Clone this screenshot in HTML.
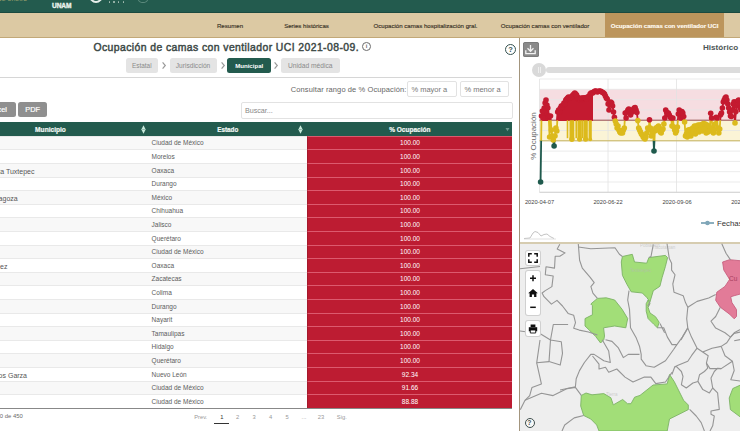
<!DOCTYPE html>
<html><head><meta charset="utf-8">
<style>
*{margin:0;padding:0;box-sizing:border-box}
html,body{width:740px;height:431px;overflow:hidden;background:#fff;font-family:"Liberation Sans",sans-serif;color:#555}
.abs{position:absolute}
.t{position:absolute;white-space:nowrap;line-height:1}
</style></head><body>

<div class="abs" style="left:0;top:0;width:740px;height:13px;background:#235b4e;border-bottom:1px solid #1b4a3f"></div>
<div class="t" style="left:-2px;top:-3px;font-size:5px;color:#8f9a6a;letter-spacing:0.5px;font-weight:bold">DE SALUD</div>
<div class="t" style="left:52px;top:2.6px;font-size:6.6px;font-weight:bold;color:#e9f2ec;-webkit-text-stroke:0.35px #e9f2ec;letter-spacing:-0.1px">UNAM</div>
<div class="t" style="left:54px;top:-2.6px;font-size:3.6px;color:#a9c2b8">Instituto de</div>
<div class="abs" style="left:89px;top:-12px;width:14px;height:15px;border-radius:50%;border:2.5px solid #e8f0ec"></div>
<div class="abs" style="left:108.5px;top:1px;width:1.5px;height:1.5px;background:#a8c0b6;border-radius:50%"></div>
<div class="abs" style="left:113px;top:1px;width:1.5px;height:1.5px;background:#a8c0b6;border-radius:50%"></div>
<div class="abs" style="left:117.5px;top:1px;width:1.5px;height:1.5px;background:#a8c0b6;border-radius:50%"></div>
<div class="abs" style="left:122.5px;top:1px;width:1.5px;height:1.5px;background:#a8c0b6;border-radius:50%"></div>
<div class="abs" style="left:138px;top:-4px;width:10px;height:7px;border-radius:50%;border:1px solid #6f9a8c;opacity:.8"></div>
<div class="abs" style="left:0;top:13px;width:740px;height:25px;background:#dcc9a3;border-bottom:1px solid #c2a878"></div>
<div class="t" style="left:130px;width:200px;text-align:center;top:23px;font-size:6.1px;color:#3a3327;-webkit-text-stroke:0.15px #3a3327">Resumen</div>
<div class="t" style="left:206.5px;width:200px;text-align:center;top:23px;font-size:6.1px;color:#3a3327;-webkit-text-stroke:0.15px #3a3327">Series históricas</div>
<div class="t" style="left:325.5px;width:200px;text-align:center;top:23px;font-size:6.1px;color:#3a3327;-webkit-text-stroke:0.15px #3a3327">Ocupación camas hospitalización gral.</div>
<div class="t" style="left:445px;width:200px;text-align:center;top:23px;font-size:6.1px;color:#3a3327;-webkit-text-stroke:0.15px #3a3327">Ocupación camas con ventilador</div>
<div class="abs" style="left:605px;top:13px;width:119px;height:24px;background:#bc955c"></div>
<div class="t" style="left:564.5px;width:200px;text-align:center;top:23px;font-size:6.1px;font-weight:bold;color:#fffaf0;-webkit-text-stroke:0.15px #fffaf0">Ocupación camas con ventilador UCI</div>
<div class="abs" style="left:518.7px;top:38px;width:1.3px;height:393px;background:#a3957d"></div>
<div class="t" style="left:93.5px;top:42.6px;font-size:10.4px;letter-spacing:0.42px;color:#3c4946;-webkit-text-stroke:0.45px #3c4946">Ocupación de camas con ventilador UCI 2021-08-09.</div>
<div class="abs" style="left:362.2px;top:42.2px;width:8.8px;height:8.8px;border-radius:50%;border:1.2px solid #6a6a6a"></div>
<div class="t" style="left:365.8px;top:43.8px;font-size:5.5px;font-weight:bold;color:#666">i</div>
<div class="abs" style="left:505.2px;top:43.5px;width:11px;height:11px;border-radius:50%;border:1.5px solid #34514f"></div>
<div class="t" style="left:508.3px;top:45.6px;font-size:7.5px;font-weight:bold;color:#34514f">?</div>
<div class="abs" style="left:125.6px;top:57.6px;width:32.400000000000006px;height:15.4px;background:#e4e4e4;border-radius:2.5px"></div>
<div class="t" style="left:125.6px;width:32.400000000000006px;text-align:center;top:63px;font-size:6.4px;font-weight:normal;color:#8a8a8a">Estatal</div>
<div class="abs" style="left:169.5px;top:57.6px;width:47.099999999999994px;height:15.4px;background:#e4e4e4;border-radius:2.5px"></div>
<div class="t" style="left:169.5px;width:47.099999999999994px;text-align:center;top:63px;font-size:6.6px;font-weight:normal;color:#8a8a8a">Jurisdicción</div>
<div class="abs" style="left:227.4px;top:57.6px;width:43.599999999999994px;height:15.4px;background:#235b4e;border-radius:2.5px"></div>
<div class="t" style="left:227.4px;width:43.599999999999994px;text-align:center;top:63px;font-size:6.1px;font-weight:bold;color:#fff">Municipal</div>
<div class="abs" style="left:281px;top:57.6px;width:58.5px;height:15.4px;background:#e4e4e4;border-radius:2.5px"></div>
<div class="t" style="left:281px;width:58.5px;text-align:center;top:63px;font-size:6.7px;font-weight:normal;color:#8a8a8a">Unidad médica</div>
<svg class="abs" style="left:160.9px;top:61px" width="6" height="9" viewBox="0 0 6 9"><path d="M1.6 1.3 L4.3 4.5 L1.6 7.7" stroke="#9a9a9a" stroke-width="1.2" fill="none"/></svg>
<svg class="abs" style="left:219.6px;top:61px" width="6" height="9" viewBox="0 0 6 9"><path d="M1.6 1.3 L4.3 4.5 L1.6 7.7" stroke="#9a9a9a" stroke-width="1.2" fill="none"/></svg>
<svg class="abs" style="left:272.9px;top:61px" width="6" height="9" viewBox="0 0 6 9"><path d="M1.6 1.3 L4.3 4.5 L1.6 7.7" stroke="#9a9a9a" stroke-width="1.2" fill="none"/></svg>
<div class="abs" style="left:0;top:76.5px;width:512px;height:1px;background:#d6d6d6"></div>
<div class="t" style="left:290.8px;top:86.2px;font-size:7.5px;letter-spacing:0.1px;color:#666">Consultar rango de % Ocupación:</div>
<div class="abs" style="left:407.4px;top:80.7px;width:49.200000000000045px;height:16.6px;border:1px solid #e2e2e2;border-radius:2px;background:#fff"></div>
<div class="t" style="left:411.4px;top:86px;font-size:7.5px;color:#777">% mayor a</div>
<div class="abs" style="left:460.4px;top:80.7px;width:48.60000000000002px;height:16.6px;border:1px solid #e2e2e2;border-radius:2px;background:#fff"></div>
<div class="t" style="left:464.4px;top:86px;font-size:7.5px;color:#777">% menor a</div>
<div class="abs" style="left:241px;top:101.5px;width:271.5px;height:17.4px;border:1px solid #e2e2e2;border-radius:2px;background:#fff"></div>
<div class="t" style="left:244.9px;top:106.8px;font-size:7.2px;color:#888">Buscar...</div>
<div class="abs" style="left:-10px;top:101.9px;width:25.6px;height:15.4px;background:#8f8f8f;border-radius:2.5px"></div>
<div class="t" style="left:-2.5px;top:106.2px;font-size:7.3px;color:#fff;-webkit-text-stroke:0.2px #fff">cel</div>
<div class="abs" style="left:18.3px;top:101.9px;width:28.7px;height:15.4px;background:#8f8f8f;border-radius:2.5px"></div>
<div class="t" style="left:18.3px;width:28.7px;text-align:center;top:106.2px;font-size:7.3px;color:#fff;-webkit-text-stroke:0.2px #fff">PDF</div>
<div class="abs" style="left:0;top:121.8px;width:512.4px;height:14px;background:#235b4e"></div>
<div class="t" style="left:0;width:101px;text-align:center;top:127.2px;font-size:6.6px;font-weight:bold;color:#f2f8f5;-webkit-text-stroke:0.2px #f2f8f5">Municipio</div>
<div class="t" style="left:177.8px;width:100px;text-align:center;top:127.2px;font-size:6.3px;font-weight:bold;color:#f2f8f5;-webkit-text-stroke:0.2px #f2f8f5">Estado</div>
<div class="t" style="left:359.8px;width:100px;text-align:center;top:127.2px;font-size:6.5px;font-weight:bold;color:#f2f8f5;-webkit-text-stroke:0.2px #f2f8f5">% Ocupación</div>
<svg class="abs" style="left:140.5px;top:124.5px" width="5" height="9" viewBox="0 0 5 9"><path d="M2.5 0.2 L4.6 4.5 L2.5 8.8 L0.4 4.5Z" fill="#c9eadc"/><path d="M1.2 4.5 H3.8" stroke="#5d8a7c" stroke-width="0.5"/></svg>
<svg class="abs" style="left:298.3px;top:124.5px" width="5" height="9" viewBox="0 0 5 9"><path d="M2.5 0.2 L4.6 4.5 L2.5 8.8 L0.4 4.5Z" fill="#c9eadc"/><path d="M1.2 4.5 H3.8" stroke="#5d8a7c" stroke-width="0.5"/></svg>
<svg class="abs" style="left:504.5px;top:127px" width="5" height="5" viewBox="0 0 5 5"><path d="M0.5 1 H4.5 L2.5 4.2Z" fill="#6f9a8f"/></svg>
<div class="abs" style="left:0;top:135.80px;width:307px;height:13.6px;background:#f8f8f8;border-top:1px solid #e9e9e9"></div>
<div class="abs" style="left:307px;top:135.80px;width:205.4px;height:13.6px;background:#bd1c32;border-top:1px solid #dc5a6e;border-left:1px solid #a5192b"></div>
<div class="t" style="left:151.6px;top:140.40px;font-size:6.5px;color:#5c5c5c">Ciudad de México</div>
<div class="t" style="left:360px;width:100px;text-align:center;top:140.40px;font-size:6.5px;color:#fff">100.00</div>
<div class="abs" style="left:0;top:149.40px;width:307px;height:13.6px;background:#ffffff;border-top:1px solid #e9e9e9"></div>
<div class="abs" style="left:307px;top:149.40px;width:205.4px;height:13.6px;background:#bd1c32;border-top:1px solid #dc5a6e;border-left:1px solid #a5192b"></div>
<div class="t" style="left:151.6px;top:154.00px;font-size:6.5px;color:#5c5c5c">Morelos</div>
<div class="t" style="left:360px;width:100px;text-align:center;top:154.00px;font-size:6.5px;color:#fff">100.00</div>
<div class="abs" style="left:0;top:163.00px;width:307px;height:13.6px;background:#f8f8f8;border-top:1px solid #e9e9e9"></div>
<div class="abs" style="left:307px;top:163.00px;width:205.4px;height:13.6px;background:#bd1c32;border-top:1px solid #dc5a6e;border-left:1px solid #a5192b"></div>
<div class="t" style="left:151.6px;top:167.60px;font-size:6.5px;color:#5c5c5c">Oaxaca</div>
<div class="t" style="left:360px;width:100px;text-align:center;top:167.60px;font-size:6.5px;color:#fff">100.00</div>
<div class="t" style="left:-100px;width:134.5px;text-align:right;top:167.60px;font-size:7px;color:#555">ta Tuxtepec</div>
<div class="abs" style="left:0;top:176.60px;width:307px;height:13.6px;background:#ffffff;border-top:1px solid #e9e9e9"></div>
<div class="abs" style="left:307px;top:176.60px;width:205.4px;height:13.6px;background:#bd1c32;border-top:1px solid #dc5a6e;border-left:1px solid #a5192b"></div>
<div class="t" style="left:151.6px;top:181.20px;font-size:6.5px;color:#5c5c5c">Durango</div>
<div class="t" style="left:360px;width:100px;text-align:center;top:181.20px;font-size:6.5px;color:#fff">100.00</div>
<div class="abs" style="left:0;top:190.20px;width:307px;height:13.6px;background:#f8f8f8;border-top:1px solid #e9e9e9"></div>
<div class="abs" style="left:307px;top:190.20px;width:205.4px;height:13.6px;background:#bd1c32;border-top:1px solid #dc5a6e;border-left:1px solid #a5192b"></div>
<div class="t" style="left:151.6px;top:194.80px;font-size:6.5px;color:#5c5c5c">México</div>
<div class="t" style="left:360px;width:100px;text-align:center;top:194.80px;font-size:6.5px;color:#fff">100.00</div>
<div class="t" style="left:-100px;width:117.7px;text-align:right;top:194.80px;font-size:7px;color:#555">agoza</div>
<div class="abs" style="left:0;top:203.80px;width:307px;height:13.6px;background:#ffffff;border-top:1px solid #e9e9e9"></div>
<div class="abs" style="left:307px;top:203.80px;width:205.4px;height:13.6px;background:#bd1c32;border-top:1px solid #dc5a6e;border-left:1px solid #a5192b"></div>
<div class="t" style="left:151.6px;top:208.40px;font-size:6.5px;color:#5c5c5c">Chihuahua</div>
<div class="t" style="left:360px;width:100px;text-align:center;top:208.40px;font-size:6.5px;color:#fff">100.00</div>
<div class="abs" style="left:0;top:217.40px;width:307px;height:13.6px;background:#f8f8f8;border-top:1px solid #e9e9e9"></div>
<div class="abs" style="left:307px;top:217.40px;width:205.4px;height:13.6px;background:#bd1c32;border-top:1px solid #dc5a6e;border-left:1px solid #a5192b"></div>
<div class="t" style="left:151.6px;top:222.00px;font-size:6.5px;color:#5c5c5c">Jalisco</div>
<div class="t" style="left:360px;width:100px;text-align:center;top:222.00px;font-size:6.5px;color:#fff">100.00</div>
<div class="abs" style="left:0;top:231.00px;width:307px;height:13.6px;background:#ffffff;border-top:1px solid #e9e9e9"></div>
<div class="abs" style="left:307px;top:231.00px;width:205.4px;height:13.6px;background:#bd1c32;border-top:1px solid #dc5a6e;border-left:1px solid #a5192b"></div>
<div class="t" style="left:151.6px;top:235.60px;font-size:6.5px;color:#5c5c5c">Querétaro</div>
<div class="t" style="left:360px;width:100px;text-align:center;top:235.60px;font-size:6.5px;color:#fff">100.00</div>
<div class="abs" style="left:0;top:244.60px;width:307px;height:13.6px;background:#f8f8f8;border-top:1px solid #e9e9e9"></div>
<div class="abs" style="left:307px;top:244.60px;width:205.4px;height:13.6px;background:#bd1c32;border-top:1px solid #dc5a6e;border-left:1px solid #a5192b"></div>
<div class="t" style="left:151.6px;top:249.20px;font-size:6.5px;color:#5c5c5c">Ciudad de México</div>
<div class="t" style="left:360px;width:100px;text-align:center;top:249.20px;font-size:6.5px;color:#fff">100.00</div>
<div class="abs" style="left:0;top:258.20px;width:307px;height:13.6px;background:#ffffff;border-top:1px solid #e9e9e9"></div>
<div class="abs" style="left:307px;top:258.20px;width:205.4px;height:13.6px;background:#bd1c32;border-top:1px solid #dc5a6e;border-left:1px solid #a5192b"></div>
<div class="t" style="left:151.6px;top:262.80px;font-size:6.5px;color:#5c5c5c">Oaxaca</div>
<div class="t" style="left:360px;width:100px;text-align:center;top:262.80px;font-size:6.5px;color:#fff">100.00</div>
<div class="t" style="left:-100px;width:107.5px;text-align:right;top:262.80px;font-size:7px;color:#555">ez</div>
<div class="abs" style="left:0;top:271.80px;width:307px;height:13.6px;background:#f8f8f8;border-top:1px solid #e9e9e9"></div>
<div class="abs" style="left:307px;top:271.80px;width:205.4px;height:13.6px;background:#bd1c32;border-top:1px solid #dc5a6e;border-left:1px solid #a5192b"></div>
<div class="t" style="left:151.6px;top:276.40px;font-size:6.5px;color:#5c5c5c">Zacatecas</div>
<div class="t" style="left:360px;width:100px;text-align:center;top:276.40px;font-size:6.5px;color:#fff">100.00</div>
<div class="abs" style="left:0;top:285.40px;width:307px;height:13.6px;background:#ffffff;border-top:1px solid #e9e9e9"></div>
<div class="abs" style="left:307px;top:285.40px;width:205.4px;height:13.6px;background:#bd1c32;border-top:1px solid #dc5a6e;border-left:1px solid #a5192b"></div>
<div class="t" style="left:151.6px;top:290.00px;font-size:6.5px;color:#5c5c5c">Colima</div>
<div class="t" style="left:360px;width:100px;text-align:center;top:290.00px;font-size:6.5px;color:#fff">100.00</div>
<div class="abs" style="left:0;top:299.00px;width:307px;height:13.6px;background:#f8f8f8;border-top:1px solid #e9e9e9"></div>
<div class="abs" style="left:307px;top:299.00px;width:205.4px;height:13.6px;background:#bd1c32;border-top:1px solid #dc5a6e;border-left:1px solid #a5192b"></div>
<div class="t" style="left:151.6px;top:303.60px;font-size:6.5px;color:#5c5c5c">Durango</div>
<div class="t" style="left:360px;width:100px;text-align:center;top:303.60px;font-size:6.5px;color:#fff">100.00</div>
<div class="abs" style="left:0;top:312.60px;width:307px;height:13.6px;background:#ffffff;border-top:1px solid #e9e9e9"></div>
<div class="abs" style="left:307px;top:312.60px;width:205.4px;height:13.6px;background:#bd1c32;border-top:1px solid #dc5a6e;border-left:1px solid #a5192b"></div>
<div class="t" style="left:151.6px;top:317.20px;font-size:6.5px;color:#5c5c5c">Nayarit</div>
<div class="t" style="left:360px;width:100px;text-align:center;top:317.20px;font-size:6.5px;color:#fff">100.00</div>
<div class="abs" style="left:0;top:326.20px;width:307px;height:13.6px;background:#f8f8f8;border-top:1px solid #e9e9e9"></div>
<div class="abs" style="left:307px;top:326.20px;width:205.4px;height:13.6px;background:#bd1c32;border-top:1px solid #dc5a6e;border-left:1px solid #a5192b"></div>
<div class="t" style="left:151.6px;top:330.80px;font-size:6.5px;color:#5c5c5c">Tamaulipas</div>
<div class="t" style="left:360px;width:100px;text-align:center;top:330.80px;font-size:6.5px;color:#fff">100.00</div>
<div class="abs" style="left:0;top:339.80px;width:307px;height:13.6px;background:#ffffff;border-top:1px solid #e9e9e9"></div>
<div class="abs" style="left:307px;top:339.80px;width:205.4px;height:13.6px;background:#bd1c32;border-top:1px solid #dc5a6e;border-left:1px solid #a5192b"></div>
<div class="t" style="left:151.6px;top:344.40px;font-size:6.5px;color:#5c5c5c">Hidalgo</div>
<div class="t" style="left:360px;width:100px;text-align:center;top:344.40px;font-size:6.5px;color:#fff">100.00</div>
<div class="abs" style="left:0;top:353.40px;width:307px;height:13.6px;background:#f8f8f8;border-top:1px solid #e9e9e9"></div>
<div class="abs" style="left:307px;top:353.40px;width:205.4px;height:13.6px;background:#bd1c32;border-top:1px solid #dc5a6e;border-left:1px solid #a5192b"></div>
<div class="t" style="left:151.6px;top:358.00px;font-size:6.5px;color:#5c5c5c">Querétaro</div>
<div class="t" style="left:360px;width:100px;text-align:center;top:358.00px;font-size:6.5px;color:#fff">100.00</div>
<div class="abs" style="left:0;top:367.00px;width:307px;height:13.6px;background:#ffffff;border-top:1px solid #e9e9e9"></div>
<div class="abs" style="left:307px;top:367.00px;width:205.4px;height:13.6px;background:#bd1c32;border-top:1px solid #dc5a6e;border-left:1px solid #a5192b"></div>
<div class="t" style="left:151.6px;top:371.60px;font-size:6.5px;color:#5c5c5c">Nuevo León</div>
<div class="t" style="left:360px;width:100px;text-align:center;top:371.60px;font-size:6.5px;color:#fff">92.34</div>
<div class="t" style="left:-100px;width:127px;text-align:right;top:371.60px;font-size:7px;color:#555">os Garza</div>
<div class="abs" style="left:0;top:380.60px;width:307px;height:13.6px;background:#f8f8f8;border-top:1px solid #e9e9e9"></div>
<div class="abs" style="left:307px;top:380.60px;width:205.4px;height:13.6px;background:#bd1c32;border-top:1px solid #dc5a6e;border-left:1px solid #a5192b"></div>
<div class="t" style="left:151.6px;top:385.20px;font-size:6.5px;color:#5c5c5c">Ciudad de México</div>
<div class="t" style="left:360px;width:100px;text-align:center;top:385.20px;font-size:6.5px;color:#fff">91.66</div>
<div class="abs" style="left:0;top:394.20px;width:307px;height:13.6px;background:#ffffff;border-top:1px solid #e9e9e9"></div>
<div class="abs" style="left:307px;top:394.20px;width:205.4px;height:13.6px;background:#bd1c32;border-top:1px solid #dc5a6e;border-left:1px solid #a5192b"></div>
<div class="t" style="left:151.6px;top:398.80px;font-size:6.5px;color:#5c5c5c">Ciudad de México</div>
<div class="t" style="left:360px;width:100px;text-align:center;top:398.80px;font-size:6.5px;color:#fff">88.88</div>
<div class="abs" style="left:0;top:407.5px;width:512.4px;height:1px;background:#888"></div>
<div class="t" style="left:-13.3px;top:414.3px;font-size:5.9px;color:#6a6a6a">1 a 20 de 450</div>
<div class="t" style="left:180.7px;width:40px;text-align:center;top:414.7px;font-size:5.8px;color:#999">Prev.</div>
<div class="t" style="left:201.8px;width:40px;text-align:center;top:414.7px;font-size:5.8px;color:#333">1</div>
<div class="t" style="left:217.7px;width:40px;text-align:center;top:414.7px;font-size:5.8px;color:#999">2</div>
<div class="t" style="left:234.2px;width:40px;text-align:center;top:414.7px;font-size:5.8px;color:#999">3</div>
<div class="t" style="left:250.5px;width:40px;text-align:center;top:414.7px;font-size:5.8px;color:#999">4</div>
<div class="t" style="left:267px;width:40px;text-align:center;top:414.7px;font-size:5.8px;color:#999">5</div>
<div class="t" style="left:284px;width:40px;text-align:center;top:414.7px;font-size:5.8px;color:#999">...</div>
<div class="t" style="left:301px;width:40px;text-align:center;top:414.7px;font-size:5.8px;color:#999">23</div>
<div class="t" style="left:321.8px;width:40px;text-align:center;top:414.7px;font-size:5.8px;color:#999">Sig.</div>
<div class="abs" style="left:214px;top:423px;width:14.7px;height:1px;background:#333"></div>
<div class="abs" style="left:522.5px;top:41.6px;width:16.7px;height:15.3px;background:#8a8a8a;border-radius:2.5px;box-shadow:inset 0 0 0 0.7px #777"></div>
<svg class="abs" style="left:522.3px;top:41.6px" width="17" height="15" viewBox="0 0 17 15"><path d="M8.5 3 V9.3 M5.5 6.3 L8.5 9.3 L11.5 6.3" stroke="#f2f2f2" stroke-width="1.3" fill="none"/><path d="M3.8 8.3 V11.7 H13.2 V8.3" stroke="#f2f2f2" stroke-width="1.3" fill="none"/></svg>
<div class="t" style="left:703px;top:44.2px;font-size:8.1px;font-weight:bold;color:#4d5555">Histórico</div>
<div class="abs" style="left:546px;top:67.2px;width:200px;height:6px;background:#dcdcdc;border-radius:3px"></div>
<div class="abs" style="left:532px;top:63.3px;width:14px;height:14px;background:#d9d9d9;border-radius:50%"></div>
<div class="abs" style="left:538.3px;top:67px;width:0.6px;height:6px;background:#eee"></div>
<div class="abs" style="left:539.8px;top:67px;width:0.6px;height:6px;background:#eee"></div>
<svg class="abs" style="left:0;top:0" width="740" height="431" viewBox="0 0 740 431">
<rect x="539.5" y="89.3" width="201" height="30.900000000000006" fill="#f6dde1"/>
<rect x="539.5" y="120.2" width="201" height="20.60000000000001" fill="#fbf4d6"/>
<line x1="539.5" x2="740" y1="192.3" y2="192.3" stroke="#e6e6e6" stroke-width="0.8"/>
<line x1="539.5" x2="740" y1="182.0" y2="182.0" stroke="#e6e6e6" stroke-width="0.8"/>
<line x1="539.5" x2="740" y1="171.7" y2="171.7" stroke="#e6e6e6" stroke-width="0.8"/>
<line x1="539.5" x2="740" y1="161.4" y2="161.4" stroke="#e6e6e6" stroke-width="0.8"/>
<line x1="539.5" x2="740" y1="151.1" y2="151.1" stroke="#e6e6e6" stroke-width="0.8"/>
<line x1="539.5" x2="740" y1="140.8" y2="140.8" stroke="#e6e6e6" stroke-width="0.8"/>
<line x1="539.5" x2="740" y1="130.5" y2="130.5" stroke="#e6e6e6" stroke-width="0.8"/>
<line x1="539.5" x2="740" y1="120.2" y2="120.2" stroke="#e6e6e6" stroke-width="0.8"/>
<line x1="539.5" x2="740" y1="109.9" y2="109.9" stroke="#e6e6e6" stroke-width="0.8"/>
<line x1="539.5" x2="740" y1="99.6" y2="99.6" stroke="#e6e6e6" stroke-width="0.8"/>
<line x1="539.5" x2="740" y1="89.3" y2="89.3" stroke="#e6e6e6" stroke-width="0.8"/>
<line x1="539.5" x2="740" y1="79.0" y2="79.0" stroke="#e6e6e6" stroke-width="0.8"/>
<line x1="539.5" x2="539.5" y1="79.0" y2="192.3" stroke="#e2e2e2" stroke-width="0.8"/>
<line x1="608" x2="608" y1="79.0" y2="192.3" stroke="#e2e2e2" stroke-width="0.8"/>
<line x1="676.5" x2="676.5" y1="79.0" y2="192.3" stroke="#e2e2e2" stroke-width="0.8"/>
<line x1="539.5" x2="740" y1="120.2" y2="120.2" stroke="#9b4a4a" stroke-width="1"/>
<line x1="539.5" x2="740" y1="140.8" y2="140.8" stroke="#c9b45a" stroke-width="1"/>
<line x1="539.5" x2="740" y1="192.3" y2="192.3" stroke="#ccc" stroke-width="0.8"/>
<defs><clipPath id="cr"><rect x="530" y="0" width="220" height="120.2"/></clipPath><clipPath id="cy"><rect x="530" y="120.2" width="220" height="20.6"/></clipPath><clipPath id="cg"><rect x="530" y="140.8" width="220" height="60"/></clipPath><clipPath id="plot"><rect x="535" y="75" width="205" height="120"/></clipPath></defs>
<g clip-path="url(#plot)">
<path d="M556 121 L557 112 L560 108 L565 101 L569 97 L575 93 L580 99 L586 98 L592 93 L593 93 L593 121 Z" fill="#c41a30"/>
<path d="M541 121 L542 111 L546 100 L549 108 L550 121 Z" fill="#c41a30"/>
<rect x="569.5" y="120.2" width="4.8" height="19.3" fill="#dcba1c"/>
<circle cx="571.9" cy="139.3" r="2.7" fill="#dcba1c"/>
<rect x="577.4" y="120.2" width="4.4" height="19.3" fill="#dcba1c"/>
<circle cx="579.6" cy="139.3" r="2.5" fill="#dcba1c"/>
<rect x="583.4" y="120.2" width="4.4" height="19.3" fill="#dcba1c"/>
<circle cx="585.6" cy="139.3" r="2.5" fill="#dcba1c"/>
<rect x="588.6" y="120.2" width="3.2" height="19.3" fill="#dcba1c"/>
<circle cx="590.2" cy="139.3" r="1.9" fill="#dcba1c"/>
<rect x="566.7" y="120.2" width="1.6" height="18" fill="#dcba1c"/>
<rect x="575.4000000000001" y="120.2" width="1.6" height="18" fill="#dcba1c"/>
<rect x="581.7" y="120.2" width="1.6" height="18" fill="#dcba1c"/>
<path d="M540.6 182.0 L541.5 116.0 L542.4 111.0 L543.3 118.0 L544.2 108.0 L545.1 103.0 L546.0 100.0 L546.9 105.0 L547.8 108.0 L548.7 116.0 L549.6 137.0 L550.5 116.0 L551.4 130.0 L552.3 136.0 L553.2 140.0 L554.1 146.0 L555.0 136.0 L555.9 128.0 L556.8 131.0 L557.7 112.0 L558.6 110.0 L559.5 112.0 L560.4 108.0 L561.3 106.0 L562.2 107.0 L563.1 105.0 L564.0 103.0 L564.9 104.0 L565.8 100.0 L566.7 99.0 L567.6 98.0 L568.5 97.0 L569.4 98.0 L570.3 98.0 L571.2 97.0 L572.1 96.0 L573.0 95.0 L573.9 94.0 L574.8 93.0 L575.7 94.0 L576.6 95.0 L577.5 97.0 L578.4 99.0 L579.3 99.0 L580.2 100.0 L581.1 98.0 L582.0 99.0 L582.9 98.0 L583.8 98.0 L584.7 98.0 L585.6 97.8 L586.5 99.0 L587.4 97.0 L588.3 97.0 L589.2 96.0 L590.1 94.0 L591.0 93.0 L591.9 93.0 L592.8 93.0 L593.7 92.0 L594.6 91.3 L595.5 91.0 L596.4 91.3 L597.3 92.0 L598.2 91.5 L599.1 91.0 L600.0 91.3 L600.9 91.3 L601.8 92.0 L602.7 92.5 L603.6 93.0 L604.5 94.0 L605.4 96.0 L606.3 98.0 L607.2 99.0 L608.1 104.0 L609.0 110.0 L609.9 104.0 L610.8 102.0 L611.7 103.0 L612.6 106.0 L613.5 112.0 L614.4 117.3 L615.3 121.0 L616.2 124.0 L617.1 128.0 L618.0 126.0 L618.9 130.0 L619.8 132.0 L620.7 133.0 L621.6 131.0 L622.5 133.0 L623.4 130.0 L624.3 128.0 L625.2 113.0 L626.1 118.0 L627.0 112.0 L627.9 110.0 L628.8 109.0 L629.7 112.0 L630.6 115.0 L631.5 110.0 L632.4 112.0 L633.3 110.0 L634.2 108.0 L635.1 107.6 L636.0 110.0 L636.9 112.5 L637.8 120.6 L638.7 128.0 L639.6 130.0 L640.5 132.0 L641.4 134.0 L642.3 135.0 L643.2 137.0 L644.1 138.0 L645.0 139.0 L645.9 137.0 L646.8 133.0 L647.7 128.0 L648.6 130.0 L649.5 119.8 L650.4 128.0 L651.3 136.0 L652.2 134.0 L653.1 131.0 L654.0 151.0 L654.9 131.0 L655.8 128.0 L656.7 130.0 L657.6 127.0 L658.5 126.0 L659.4 128.0 L660.3 132.0 L661.2 133.0 L662.1 130.0 L663.0 129.0 L663.9 124.0 L664.8 118.0 L665.7 110.0 L666.6 112.0 L667.5 114.0 L668.4 113.0 L669.3 115.0 L670.2 117.0 L671.1 118.0 L672.0 126.0 L672.9 118.0 L673.8 127.0 L674.7 130.0 L675.6 133.0 L676.5 131.0 L677.4 127.0 L678.3 114.0 L679.2 110.0 L680.1 112.0 L681.0 118.0 L681.9 111.6 L682.8 113.0 L683.7 116.5 L684.6 122.0 L685.5 136.0 L686.4 134.0 L687.3 137.0 L688.2 130.0 L689.1 135.0 L690.0 129.5 L690.9 136.0 L691.8 133.0 L692.7 128.0 L693.6 132.0 L694.5 126.0 L695.4 134.0 L696.3 126.0 L697.2 131.0 L698.1 125.0 L699.0 132.0 L699.9 125.0 L700.8 130.0 L701.7 124.6 L702.6 131.0 L703.5 123.5 L704.4 129.0 L705.3 124.0 L706.2 133.0 L707.1 125.0 L708.0 132.0 L708.9 126.0 L709.8 131.0 L710.7 113.2 L711.6 118.0 L712.5 128.0 L713.4 133.0 L714.3 130.0 L715.2 124.0 L716.1 117.3 L717.0 118.0 L717.9 128.0 L718.8 133.0 L719.7 129.0 L720.6 114.8 L721.5 113.0 L722.4 108.0 L723.3 102.0 L724.2 100.0 L725.1 98.0 L726.0 97.0 L726.9 100.0 L727.8 104.0 L728.7 108.0 L729.6 112.0 L730.5 116.0 L731.4 116.5 L732.3 110.0 L733.2 104.0 L734.1 101.9 L735.0 123.0 L735.9 111.6 L736.8 106.0 L737.7 101.0 L738.6 100.0 L739.5 104.0 L740.4 108.0 L741.3 110.0" clip-path="url(#cr)" fill="none" stroke="#c41a30" stroke-width="1.8" stroke-linejoin="round"/>
<path d="M540.6 182.0 L541.5 116.0 L542.4 111.0 L543.3 118.0 L544.2 108.0 L545.1 103.0 L546.0 100.0 L546.9 105.0 L547.8 108.0 L548.7 116.0 L549.6 137.0 L550.5 116.0 L551.4 130.0 L552.3 136.0 L553.2 140.0 L554.1 146.0 L555.0 136.0 L555.9 128.0 L556.8 131.0 L557.7 112.0 L558.6 110.0 L559.5 112.0 L560.4 108.0 L561.3 106.0 L562.2 107.0 L563.1 105.0 L564.0 103.0 L564.9 104.0 L565.8 100.0 L566.7 99.0 L567.6 98.0 L568.5 97.0 L569.4 98.0 L570.3 98.0 L571.2 97.0 L572.1 96.0 L573.0 95.0 L573.9 94.0 L574.8 93.0 L575.7 94.0 L576.6 95.0 L577.5 97.0 L578.4 99.0 L579.3 99.0 L580.2 100.0 L581.1 98.0 L582.0 99.0 L582.9 98.0 L583.8 98.0 L584.7 98.0 L585.6 97.8 L586.5 99.0 L587.4 97.0 L588.3 97.0 L589.2 96.0 L590.1 94.0 L591.0 93.0 L591.9 93.0 L592.8 93.0 L593.7 92.0 L594.6 91.3 L595.5 91.0 L596.4 91.3 L597.3 92.0 L598.2 91.5 L599.1 91.0 L600.0 91.3 L600.9 91.3 L601.8 92.0 L602.7 92.5 L603.6 93.0 L604.5 94.0 L605.4 96.0 L606.3 98.0 L607.2 99.0 L608.1 104.0 L609.0 110.0 L609.9 104.0 L610.8 102.0 L611.7 103.0 L612.6 106.0 L613.5 112.0 L614.4 117.3 L615.3 121.0 L616.2 124.0 L617.1 128.0 L618.0 126.0 L618.9 130.0 L619.8 132.0 L620.7 133.0 L621.6 131.0 L622.5 133.0 L623.4 130.0 L624.3 128.0 L625.2 113.0 L626.1 118.0 L627.0 112.0 L627.9 110.0 L628.8 109.0 L629.7 112.0 L630.6 115.0 L631.5 110.0 L632.4 112.0 L633.3 110.0 L634.2 108.0 L635.1 107.6 L636.0 110.0 L636.9 112.5 L637.8 120.6 L638.7 128.0 L639.6 130.0 L640.5 132.0 L641.4 134.0 L642.3 135.0 L643.2 137.0 L644.1 138.0 L645.0 139.0 L645.9 137.0 L646.8 133.0 L647.7 128.0 L648.6 130.0 L649.5 119.8 L650.4 128.0 L651.3 136.0 L652.2 134.0 L653.1 131.0 L654.0 151.0 L654.9 131.0 L655.8 128.0 L656.7 130.0 L657.6 127.0 L658.5 126.0 L659.4 128.0 L660.3 132.0 L661.2 133.0 L662.1 130.0 L663.0 129.0 L663.9 124.0 L664.8 118.0 L665.7 110.0 L666.6 112.0 L667.5 114.0 L668.4 113.0 L669.3 115.0 L670.2 117.0 L671.1 118.0 L672.0 126.0 L672.9 118.0 L673.8 127.0 L674.7 130.0 L675.6 133.0 L676.5 131.0 L677.4 127.0 L678.3 114.0 L679.2 110.0 L680.1 112.0 L681.0 118.0 L681.9 111.6 L682.8 113.0 L683.7 116.5 L684.6 122.0 L685.5 136.0 L686.4 134.0 L687.3 137.0 L688.2 130.0 L689.1 135.0 L690.0 129.5 L690.9 136.0 L691.8 133.0 L692.7 128.0 L693.6 132.0 L694.5 126.0 L695.4 134.0 L696.3 126.0 L697.2 131.0 L698.1 125.0 L699.0 132.0 L699.9 125.0 L700.8 130.0 L701.7 124.6 L702.6 131.0 L703.5 123.5 L704.4 129.0 L705.3 124.0 L706.2 133.0 L707.1 125.0 L708.0 132.0 L708.9 126.0 L709.8 131.0 L710.7 113.2 L711.6 118.0 L712.5 128.0 L713.4 133.0 L714.3 130.0 L715.2 124.0 L716.1 117.3 L717.0 118.0 L717.9 128.0 L718.8 133.0 L719.7 129.0 L720.6 114.8 L721.5 113.0 L722.4 108.0 L723.3 102.0 L724.2 100.0 L725.1 98.0 L726.0 97.0 L726.9 100.0 L727.8 104.0 L728.7 108.0 L729.6 112.0 L730.5 116.0 L731.4 116.5 L732.3 110.0 L733.2 104.0 L734.1 101.9 L735.0 123.0 L735.9 111.6 L736.8 106.0 L737.7 101.0 L738.6 100.0 L739.5 104.0 L740.4 108.0 L741.3 110.0" clip-path="url(#cy)" fill="none" stroke="#dcba1c" stroke-width="1.8" stroke-linejoin="round"/>
<path d="M540.6 182.0 L541.5 116.0 L542.4 111.0 L543.3 118.0 L544.2 108.0 L545.1 103.0 L546.0 100.0 L546.9 105.0 L547.8 108.0 L548.7 116.0 L549.6 137.0 L550.5 116.0 L551.4 130.0 L552.3 136.0 L553.2 140.0 L554.1 146.0 L555.0 136.0 L555.9 128.0 L556.8 131.0 L557.7 112.0 L558.6 110.0 L559.5 112.0 L560.4 108.0 L561.3 106.0 L562.2 107.0 L563.1 105.0 L564.0 103.0 L564.9 104.0 L565.8 100.0 L566.7 99.0 L567.6 98.0 L568.5 97.0 L569.4 98.0 L570.3 98.0 L571.2 97.0 L572.1 96.0 L573.0 95.0 L573.9 94.0 L574.8 93.0 L575.7 94.0 L576.6 95.0 L577.5 97.0 L578.4 99.0 L579.3 99.0 L580.2 100.0 L581.1 98.0 L582.0 99.0 L582.9 98.0 L583.8 98.0 L584.7 98.0 L585.6 97.8 L586.5 99.0 L587.4 97.0 L588.3 97.0 L589.2 96.0 L590.1 94.0 L591.0 93.0 L591.9 93.0 L592.8 93.0 L593.7 92.0 L594.6 91.3 L595.5 91.0 L596.4 91.3 L597.3 92.0 L598.2 91.5 L599.1 91.0 L600.0 91.3 L600.9 91.3 L601.8 92.0 L602.7 92.5 L603.6 93.0 L604.5 94.0 L605.4 96.0 L606.3 98.0 L607.2 99.0 L608.1 104.0 L609.0 110.0 L609.9 104.0 L610.8 102.0 L611.7 103.0 L612.6 106.0 L613.5 112.0 L614.4 117.3 L615.3 121.0 L616.2 124.0 L617.1 128.0 L618.0 126.0 L618.9 130.0 L619.8 132.0 L620.7 133.0 L621.6 131.0 L622.5 133.0 L623.4 130.0 L624.3 128.0 L625.2 113.0 L626.1 118.0 L627.0 112.0 L627.9 110.0 L628.8 109.0 L629.7 112.0 L630.6 115.0 L631.5 110.0 L632.4 112.0 L633.3 110.0 L634.2 108.0 L635.1 107.6 L636.0 110.0 L636.9 112.5 L637.8 120.6 L638.7 128.0 L639.6 130.0 L640.5 132.0 L641.4 134.0 L642.3 135.0 L643.2 137.0 L644.1 138.0 L645.0 139.0 L645.9 137.0 L646.8 133.0 L647.7 128.0 L648.6 130.0 L649.5 119.8 L650.4 128.0 L651.3 136.0 L652.2 134.0 L653.1 131.0 L654.0 151.0 L654.9 131.0 L655.8 128.0 L656.7 130.0 L657.6 127.0 L658.5 126.0 L659.4 128.0 L660.3 132.0 L661.2 133.0 L662.1 130.0 L663.0 129.0 L663.9 124.0 L664.8 118.0 L665.7 110.0 L666.6 112.0 L667.5 114.0 L668.4 113.0 L669.3 115.0 L670.2 117.0 L671.1 118.0 L672.0 126.0 L672.9 118.0 L673.8 127.0 L674.7 130.0 L675.6 133.0 L676.5 131.0 L677.4 127.0 L678.3 114.0 L679.2 110.0 L680.1 112.0 L681.0 118.0 L681.9 111.6 L682.8 113.0 L683.7 116.5 L684.6 122.0 L685.5 136.0 L686.4 134.0 L687.3 137.0 L688.2 130.0 L689.1 135.0 L690.0 129.5 L690.9 136.0 L691.8 133.0 L692.7 128.0 L693.6 132.0 L694.5 126.0 L695.4 134.0 L696.3 126.0 L697.2 131.0 L698.1 125.0 L699.0 132.0 L699.9 125.0 L700.8 130.0 L701.7 124.6 L702.6 131.0 L703.5 123.5 L704.4 129.0 L705.3 124.0 L706.2 133.0 L707.1 125.0 L708.0 132.0 L708.9 126.0 L709.8 131.0 L710.7 113.2 L711.6 118.0 L712.5 128.0 L713.4 133.0 L714.3 130.0 L715.2 124.0 L716.1 117.3 L717.0 118.0 L717.9 128.0 L718.8 133.0 L719.7 129.0 L720.6 114.8 L721.5 113.0 L722.4 108.0 L723.3 102.0 L724.2 100.0 L725.1 98.0 L726.0 97.0 L726.9 100.0 L727.8 104.0 L728.7 108.0 L729.6 112.0 L730.5 116.0 L731.4 116.5 L732.3 110.0 L733.2 104.0 L734.1 101.9 L735.0 123.0 L735.9 111.6 L736.8 106.0 L737.7 101.0 L738.6 100.0 L739.5 104.0 L740.4 108.0 L741.3 110.0" clip-path="url(#cg)" fill="none" stroke="#1f5a4d" stroke-width="1.8" stroke-linejoin="round"/>
<circle cx="540.6" cy="182.0" r="2.8" fill="#1f5a4d"/>
<circle cx="541.5" cy="116.0" r="2.8" fill="#c41a30"/>
<circle cx="542.4" cy="111.0" r="2.8" fill="#c41a30"/>
<circle cx="543.3" cy="118.0" r="2.8" fill="#c41a30"/>
<circle cx="544.2" cy="108.0" r="2.8" fill="#c41a30"/>
<circle cx="545.1" cy="103.0" r="2.8" fill="#c41a30"/>
<circle cx="546.0" cy="100.0" r="2.8" fill="#c41a30"/>
<circle cx="546.9" cy="105.0" r="2.8" fill="#c41a30"/>
<circle cx="547.8" cy="108.0" r="2.8" fill="#c41a30"/>
<circle cx="548.7" cy="116.0" r="2.8" fill="#c41a30"/>
<circle cx="549.6" cy="137.0" r="2.8" fill="#dcba1c"/>
<circle cx="550.5" cy="116.0" r="2.8" fill="#c41a30"/>
<circle cx="551.4" cy="130.0" r="2.8" fill="#dcba1c"/>
<circle cx="552.3" cy="136.0" r="2.8" fill="#dcba1c"/>
<circle cx="553.2" cy="140.0" r="2.8" fill="#dcba1c"/>
<circle cx="554.1" cy="146.0" r="2.8" fill="#1f5a4d"/>
<circle cx="555.0" cy="136.0" r="2.8" fill="#dcba1c"/>
<circle cx="555.9" cy="128.0" r="2.8" fill="#dcba1c"/>
<circle cx="556.8" cy="131.0" r="2.8" fill="#dcba1c"/>
<circle cx="557.7" cy="112.0" r="2.8" fill="#c41a30"/>
<circle cx="558.6" cy="110.0" r="2.8" fill="#c41a30"/>
<circle cx="559.5" cy="112.0" r="2.8" fill="#c41a30"/>
<circle cx="560.4" cy="108.0" r="2.8" fill="#c41a30"/>
<circle cx="561.3" cy="106.0" r="2.8" fill="#c41a30"/>
<circle cx="562.2" cy="107.0" r="2.8" fill="#c41a30"/>
<circle cx="563.1" cy="105.0" r="2.8" fill="#c41a30"/>
<circle cx="564.0" cy="103.0" r="2.8" fill="#c41a30"/>
<circle cx="564.9" cy="104.0" r="2.8" fill="#c41a30"/>
<circle cx="565.8" cy="100.0" r="2.8" fill="#c41a30"/>
<circle cx="566.7" cy="99.0" r="2.8" fill="#c41a30"/>
<circle cx="567.6" cy="98.0" r="2.8" fill="#c41a30"/>
<circle cx="568.5" cy="97.0" r="2.8" fill="#c41a30"/>
<circle cx="569.4" cy="98.0" r="2.8" fill="#c41a30"/>
<circle cx="570.3" cy="98.0" r="2.8" fill="#c41a30"/>
<circle cx="571.2" cy="97.0" r="2.8" fill="#c41a30"/>
<circle cx="572.1" cy="96.0" r="2.8" fill="#c41a30"/>
<circle cx="573.0" cy="95.0" r="2.8" fill="#c41a30"/>
<circle cx="573.9" cy="94.0" r="2.8" fill="#c41a30"/>
<circle cx="574.8" cy="93.0" r="2.8" fill="#c41a30"/>
<circle cx="575.7" cy="94.0" r="2.8" fill="#c41a30"/>
<circle cx="576.6" cy="95.0" r="2.8" fill="#c41a30"/>
<circle cx="577.5" cy="97.0" r="2.8" fill="#c41a30"/>
<circle cx="578.4" cy="99.0" r="2.8" fill="#c41a30"/>
<circle cx="579.3" cy="99.0" r="2.8" fill="#c41a30"/>
<circle cx="580.2" cy="100.0" r="2.8" fill="#c41a30"/>
<circle cx="581.1" cy="98.0" r="2.8" fill="#c41a30"/>
<circle cx="582.0" cy="99.0" r="2.8" fill="#c41a30"/>
<circle cx="582.9" cy="98.0" r="2.8" fill="#c41a30"/>
<circle cx="583.8" cy="98.0" r="2.8" fill="#c41a30"/>
<circle cx="584.7" cy="98.0" r="2.8" fill="#c41a30"/>
<circle cx="585.6" cy="97.8" r="2.8" fill="#c41a30"/>
<circle cx="586.5" cy="99.0" r="2.8" fill="#c41a30"/>
<circle cx="587.4" cy="97.0" r="2.8" fill="#c41a30"/>
<circle cx="588.3" cy="97.0" r="2.8" fill="#c41a30"/>
<circle cx="589.2" cy="96.0" r="2.8" fill="#c41a30"/>
<circle cx="590.1" cy="94.0" r="2.8" fill="#c41a30"/>
<circle cx="591.0" cy="93.0" r="2.8" fill="#c41a30"/>
<circle cx="591.9" cy="93.0" r="2.8" fill="#c41a30"/>
<circle cx="592.8" cy="93.0" r="2.8" fill="#c41a30"/>
<circle cx="593.7" cy="92.0" r="2.8" fill="#c41a30"/>
<circle cx="594.6" cy="91.3" r="2.8" fill="#c41a30"/>
<circle cx="595.5" cy="91.0" r="2.8" fill="#c41a30"/>
<circle cx="596.4" cy="91.3" r="2.8" fill="#c41a30"/>
<circle cx="597.3" cy="92.0" r="2.8" fill="#c41a30"/>
<circle cx="598.2" cy="91.5" r="2.8" fill="#c41a30"/>
<circle cx="599.1" cy="91.0" r="2.8" fill="#c41a30"/>
<circle cx="600.0" cy="91.3" r="2.8" fill="#c41a30"/>
<circle cx="600.9" cy="91.3" r="2.8" fill="#c41a30"/>
<circle cx="601.8" cy="92.0" r="2.8" fill="#c41a30"/>
<circle cx="602.7" cy="92.5" r="2.8" fill="#c41a30"/>
<circle cx="603.6" cy="93.0" r="2.8" fill="#c41a30"/>
<circle cx="604.5" cy="94.0" r="2.8" fill="#c41a30"/>
<circle cx="605.4" cy="96.0" r="2.8" fill="#c41a30"/>
<circle cx="606.3" cy="98.0" r="2.8" fill="#c41a30"/>
<circle cx="607.2" cy="99.0" r="2.8" fill="#c41a30"/>
<circle cx="608.1" cy="104.0" r="2.8" fill="#c41a30"/>
<circle cx="609.0" cy="110.0" r="2.8" fill="#c41a30"/>
<circle cx="609.9" cy="104.0" r="2.8" fill="#c41a30"/>
<circle cx="610.8" cy="102.0" r="2.8" fill="#c41a30"/>
<circle cx="611.7" cy="103.0" r="2.8" fill="#c41a30"/>
<circle cx="612.6" cy="106.0" r="2.8" fill="#c41a30"/>
<circle cx="613.5" cy="112.0" r="2.8" fill="#c41a30"/>
<circle cx="614.4" cy="117.3" r="2.8" fill="#c41a30"/>
<circle cx="615.3" cy="121.0" r="2.8" fill="#dcba1c"/>
<circle cx="616.2" cy="124.0" r="2.8" fill="#dcba1c"/>
<circle cx="617.1" cy="128.0" r="2.8" fill="#dcba1c"/>
<circle cx="618.0" cy="126.0" r="2.8" fill="#dcba1c"/>
<circle cx="618.9" cy="130.0" r="2.8" fill="#dcba1c"/>
<circle cx="619.8" cy="132.0" r="2.8" fill="#dcba1c"/>
<circle cx="620.7" cy="133.0" r="2.8" fill="#dcba1c"/>
<circle cx="621.6" cy="131.0" r="2.8" fill="#dcba1c"/>
<circle cx="622.5" cy="133.0" r="2.8" fill="#dcba1c"/>
<circle cx="623.4" cy="130.0" r="2.8" fill="#dcba1c"/>
<circle cx="624.3" cy="128.0" r="2.8" fill="#dcba1c"/>
<circle cx="625.2" cy="113.0" r="2.8" fill="#c41a30"/>
<circle cx="626.1" cy="118.0" r="2.8" fill="#c41a30"/>
<circle cx="627.0" cy="112.0" r="2.8" fill="#c41a30"/>
<circle cx="627.9" cy="110.0" r="2.8" fill="#c41a30"/>
<circle cx="628.8" cy="109.0" r="2.8" fill="#c41a30"/>
<circle cx="629.7" cy="112.0" r="2.8" fill="#c41a30"/>
<circle cx="630.6" cy="115.0" r="2.8" fill="#c41a30"/>
<circle cx="631.5" cy="110.0" r="2.8" fill="#c41a30"/>
<circle cx="632.4" cy="112.0" r="2.8" fill="#c41a30"/>
<circle cx="633.3" cy="110.0" r="2.8" fill="#c41a30"/>
<circle cx="634.2" cy="108.0" r="2.8" fill="#c41a30"/>
<circle cx="635.1" cy="107.6" r="2.8" fill="#c41a30"/>
<circle cx="636.0" cy="110.0" r="2.8" fill="#c41a30"/>
<circle cx="636.9" cy="112.5" r="2.8" fill="#c41a30"/>
<circle cx="637.8" cy="120.6" r="2.8" fill="#dcba1c"/>
<circle cx="638.7" cy="128.0" r="2.8" fill="#dcba1c"/>
<circle cx="639.6" cy="130.0" r="2.8" fill="#dcba1c"/>
<circle cx="640.5" cy="132.0" r="2.8" fill="#dcba1c"/>
<circle cx="641.4" cy="134.0" r="2.8" fill="#dcba1c"/>
<circle cx="642.3" cy="135.0" r="2.8" fill="#dcba1c"/>
<circle cx="643.2" cy="137.0" r="2.8" fill="#dcba1c"/>
<circle cx="644.1" cy="138.0" r="2.8" fill="#dcba1c"/>
<circle cx="645.0" cy="139.0" r="2.8" fill="#dcba1c"/>
<circle cx="645.9" cy="137.0" r="2.8" fill="#dcba1c"/>
<circle cx="646.8" cy="133.0" r="2.8" fill="#dcba1c"/>
<circle cx="647.7" cy="128.0" r="2.8" fill="#dcba1c"/>
<circle cx="648.6" cy="130.0" r="2.8" fill="#dcba1c"/>
<circle cx="649.5" cy="119.8" r="2.8" fill="#c41a30"/>
<circle cx="650.4" cy="128.0" r="2.8" fill="#dcba1c"/>
<circle cx="651.3" cy="136.0" r="2.8" fill="#dcba1c"/>
<circle cx="652.2" cy="134.0" r="2.8" fill="#dcba1c"/>
<circle cx="653.1" cy="131.0" r="2.8" fill="#dcba1c"/>
<circle cx="654.0" cy="151.0" r="2.8" fill="#1f5a4d"/>
<circle cx="654.9" cy="131.0" r="2.8" fill="#dcba1c"/>
<circle cx="655.8" cy="128.0" r="2.8" fill="#dcba1c"/>
<circle cx="656.7" cy="130.0" r="2.8" fill="#dcba1c"/>
<circle cx="657.6" cy="127.0" r="2.8" fill="#dcba1c"/>
<circle cx="658.5" cy="126.0" r="2.8" fill="#dcba1c"/>
<circle cx="659.4" cy="128.0" r="2.8" fill="#dcba1c"/>
<circle cx="660.3" cy="132.0" r="2.8" fill="#dcba1c"/>
<circle cx="661.2" cy="133.0" r="2.8" fill="#dcba1c"/>
<circle cx="662.1" cy="130.0" r="2.8" fill="#dcba1c"/>
<circle cx="663.0" cy="129.0" r="2.8" fill="#dcba1c"/>
<circle cx="663.9" cy="124.0" r="2.8" fill="#dcba1c"/>
<circle cx="664.8" cy="118.0" r="2.8" fill="#c41a30"/>
<circle cx="665.7" cy="110.0" r="2.8" fill="#c41a30"/>
<circle cx="666.6" cy="112.0" r="2.8" fill="#c41a30"/>
<circle cx="667.5" cy="114.0" r="2.8" fill="#c41a30"/>
<circle cx="668.4" cy="113.0" r="2.8" fill="#c41a30"/>
<circle cx="669.3" cy="115.0" r="2.8" fill="#c41a30"/>
<circle cx="670.2" cy="117.0" r="2.8" fill="#c41a30"/>
<circle cx="671.1" cy="118.0" r="2.8" fill="#c41a30"/>
<circle cx="672.0" cy="126.0" r="2.8" fill="#dcba1c"/>
<circle cx="672.9" cy="118.0" r="2.8" fill="#c41a30"/>
<circle cx="673.8" cy="127.0" r="2.8" fill="#dcba1c"/>
<circle cx="674.7" cy="130.0" r="2.8" fill="#dcba1c"/>
<circle cx="675.6" cy="133.0" r="2.8" fill="#dcba1c"/>
<circle cx="676.5" cy="131.0" r="2.8" fill="#dcba1c"/>
<circle cx="677.4" cy="127.0" r="2.8" fill="#dcba1c"/>
<circle cx="678.3" cy="114.0" r="2.8" fill="#c41a30"/>
<circle cx="679.2" cy="110.0" r="2.8" fill="#c41a30"/>
<circle cx="680.1" cy="112.0" r="2.8" fill="#c41a30"/>
<circle cx="681.0" cy="118.0" r="2.8" fill="#c41a30"/>
<circle cx="681.9" cy="111.6" r="2.8" fill="#c41a30"/>
<circle cx="682.8" cy="113.0" r="2.8" fill="#c41a30"/>
<circle cx="683.7" cy="116.5" r="2.8" fill="#c41a30"/>
<circle cx="684.6" cy="122.0" r="2.8" fill="#dcba1c"/>
<circle cx="685.5" cy="136.0" r="2.8" fill="#dcba1c"/>
<circle cx="686.4" cy="134.0" r="2.8" fill="#dcba1c"/>
<circle cx="687.3" cy="137.0" r="2.8" fill="#dcba1c"/>
<circle cx="688.2" cy="130.0" r="2.8" fill="#dcba1c"/>
<circle cx="689.1" cy="135.0" r="2.8" fill="#dcba1c"/>
<circle cx="690.0" cy="129.5" r="2.8" fill="#dcba1c"/>
<circle cx="690.9" cy="136.0" r="2.8" fill="#dcba1c"/>
<circle cx="691.8" cy="133.0" r="2.8" fill="#dcba1c"/>
<circle cx="692.7" cy="128.0" r="2.8" fill="#dcba1c"/>
<circle cx="693.6" cy="132.0" r="2.8" fill="#dcba1c"/>
<circle cx="694.5" cy="126.0" r="2.8" fill="#dcba1c"/>
<circle cx="695.4" cy="134.0" r="2.8" fill="#dcba1c"/>
<circle cx="696.3" cy="126.0" r="2.8" fill="#dcba1c"/>
<circle cx="697.2" cy="131.0" r="2.8" fill="#dcba1c"/>
<circle cx="698.1" cy="125.0" r="2.8" fill="#dcba1c"/>
<circle cx="699.0" cy="132.0" r="2.8" fill="#dcba1c"/>
<circle cx="699.9" cy="125.0" r="2.8" fill="#dcba1c"/>
<circle cx="700.8" cy="130.0" r="2.8" fill="#dcba1c"/>
<circle cx="701.7" cy="124.6" r="2.8" fill="#dcba1c"/>
<circle cx="702.6" cy="131.0" r="2.8" fill="#dcba1c"/>
<circle cx="703.5" cy="123.5" r="2.8" fill="#dcba1c"/>
<circle cx="704.4" cy="129.0" r="2.8" fill="#dcba1c"/>
<circle cx="705.3" cy="124.0" r="2.8" fill="#dcba1c"/>
<circle cx="706.2" cy="133.0" r="2.8" fill="#dcba1c"/>
<circle cx="707.1" cy="125.0" r="2.8" fill="#dcba1c"/>
<circle cx="708.0" cy="132.0" r="2.8" fill="#dcba1c"/>
<circle cx="708.9" cy="126.0" r="2.8" fill="#dcba1c"/>
<circle cx="709.8" cy="131.0" r="2.8" fill="#dcba1c"/>
<circle cx="710.7" cy="113.2" r="2.8" fill="#c41a30"/>
<circle cx="711.6" cy="118.0" r="2.8" fill="#c41a30"/>
<circle cx="712.5" cy="128.0" r="2.8" fill="#dcba1c"/>
<circle cx="713.4" cy="133.0" r="2.8" fill="#dcba1c"/>
<circle cx="714.3" cy="130.0" r="2.8" fill="#dcba1c"/>
<circle cx="715.2" cy="124.0" r="2.8" fill="#dcba1c"/>
<circle cx="716.1" cy="117.3" r="2.8" fill="#c41a30"/>
<circle cx="717.0" cy="118.0" r="2.8" fill="#c41a30"/>
<circle cx="717.9" cy="128.0" r="2.8" fill="#dcba1c"/>
<circle cx="718.8" cy="133.0" r="2.8" fill="#dcba1c"/>
<circle cx="719.7" cy="129.0" r="2.8" fill="#dcba1c"/>
<circle cx="720.6" cy="114.8" r="2.8" fill="#c41a30"/>
<circle cx="721.5" cy="113.0" r="2.8" fill="#c41a30"/>
<circle cx="722.4" cy="108.0" r="2.8" fill="#c41a30"/>
<circle cx="723.3" cy="102.0" r="2.8" fill="#c41a30"/>
<circle cx="724.2" cy="100.0" r="2.8" fill="#c41a30"/>
<circle cx="725.1" cy="98.0" r="2.8" fill="#c41a30"/>
<circle cx="726.0" cy="97.0" r="2.8" fill="#c41a30"/>
<circle cx="726.9" cy="100.0" r="2.8" fill="#c41a30"/>
<circle cx="727.8" cy="104.0" r="2.8" fill="#c41a30"/>
<circle cx="728.7" cy="108.0" r="2.8" fill="#c41a30"/>
<circle cx="729.6" cy="112.0" r="2.8" fill="#c41a30"/>
<circle cx="730.5" cy="116.0" r="2.8" fill="#c41a30"/>
<circle cx="731.4" cy="116.5" r="2.8" fill="#c41a30"/>
<circle cx="732.3" cy="110.0" r="2.8" fill="#c41a30"/>
<circle cx="733.2" cy="104.0" r="2.8" fill="#c41a30"/>
<circle cx="734.1" cy="101.9" r="2.8" fill="#c41a30"/>
<circle cx="735.0" cy="123.0" r="2.8" fill="#dcba1c"/>
<circle cx="735.9" cy="111.6" r="2.8" fill="#c41a30"/>
<circle cx="736.8" cy="106.0" r="2.8" fill="#c41a30"/>
<circle cx="737.7" cy="101.0" r="2.8" fill="#c41a30"/>
<circle cx="738.6" cy="100.0" r="2.8" fill="#c41a30"/>
<circle cx="739.5" cy="104.0" r="2.8" fill="#c41a30"/>
<circle cx="740.4" cy="108.0" r="2.8" fill="#c41a30"/>
<circle cx="741.3" cy="110.0" r="2.8" fill="#c41a30"/>
</g>
<text x="535.5" y="136" transform="rotate(-90 535.5 136)" text-anchor="middle" font-size="8" fill="#666" font-family="Liberation Sans">% Ocupación</text>
<text x="539.5" y="203.8" text-anchor="middle" font-size="5.7" fill="#444" font-family="Liberation Sans">2020-04-07</text>
<text x="608" y="203.8" text-anchor="middle" font-size="5.7" fill="#444" font-family="Liberation Sans">2020-06-22</text>
<text x="677" y="203.8" text-anchor="middle" font-size="5.7" fill="#444" font-family="Liberation Sans">2020-09-06</text>
<text x="745.5" y="203.8" text-anchor="middle" font-size="5.7" fill="#444" font-family="Liberation Sans">2020-11-21</text>
<line x1="701" x2="714" y1="223" y2="223" stroke="#7fa6b8" stroke-width="1.8"/>
<circle cx="707.5" cy="223" r="2.3" fill="#7fa6b8"/>
<text x="717" y="225.8" font-size="7.8" fill="#333" font-family="Liberation Sans">Fechas</text>
<path d="M524 238.5 L530 238 L533 233 L535 231.5 L538 232.5 L541 236 L544 234.5 L547 234 L550 236.5 L554 238.5" fill="none" stroke="#aaa" stroke-width="0.7"/>
<line x1="524" x2="556" y1="239" y2="239" stroke="#ccc" stroke-width="0.6"/>
</svg>
<div class="abs" style="left:520px;top:242px;width:220px;height:189px;background:#eeeeee;border-top:2.2px solid #d6ccb0"></div>
<svg class="abs" style="left:0;top:0" width="740" height="431" viewBox="0 0 740 431">
<defs><clipPath id="mapc"><rect x="520" y="243.5" width="220" height="188"/></clipPath></defs><g clip-path="url(#mapc)">
<path d="M590.8 304.0 L597.4 298.4 L606.2 297.8 L614.7 300.0 L622.1 309.3 L627.7 318.6 L625.8 327.8 L614.7 326.0 L603.6 327.8 L604.5 336.0 L603.8 339.7 L600.6 343.0 L595.7 336.5 L589.2 330.0 L585.0 326.0 L585.0 318.6 L592.4 314.8 L592.4 305.6 Z" fill="#a2de78" stroke="#7cb264" stroke-width="0.9"/>
<path d="M622.4 256.5 L632.3 254.3 L634.5 262.0 L646.7 263.2 L648.9 257.6 L665.4 255.4 L667.6 257.6 L665.4 266.5 L662.1 277.5 L659.9 286.3 L653.3 290.7 L650.0 301.8 L646.7 297.4 L642.3 293.0 L631.2 291.8 L626.8 284.1 L622.4 275.3 L621.3 262.0 Z" fill="#a2de78" stroke="#7cb264" stroke-width="0.9"/>
<path d="M648.1 300.0 L650.0 303.7 L648.1 307.4 L650.0 313.0 L655.5 316.7 L659.2 322.3 L657.4 327.8 L653.6 324.1 L648.1 318.6 L646.2 311.1 L646.2 303.7 Z" fill="#a2de78" stroke="#7cb264" stroke-width="0.9"/>
<path d="M581.3 395.4 L586.0 393.0 L592.0 394.8 L603.8 393.6 L610.9 397.8 L613.3 404.9 L622.7 399.5 L627.5 403.7 L631.0 403.7 L634.6 397.2 L640.0 395.4 L653.1 385.0 L667.2 383.9 L669.5 374.5 L674.2 381.5 L678.9 390.9 L683.6 400.3 L688.3 405.0 L688.3 409.6 L679.0 414.3 L669.5 419.0 L667.2 431.0 L599.0 431.0 L596.7 425.0 L590.8 419.0 L583.7 415.5 L580.7 406.0 Z" fill="#a2de78" stroke="#7cb264" stroke-width="0.9"/>
<path d="M743.0 383.9 L732.8 388.5 L729.2 398.0 L730.4 409.6 L743.0 419.0 Z" fill="#a2de78" stroke="#7cb264" stroke-width="0.9"/>
<path d="M722.6 262.0 L729.6 259.7 L743.0 261.0 L743.0 293.3 L734.2 295.7 L730.7 296.8 L731.9 302.6 L736.5 309.6 L736.5 316.5 L734.2 318.8 L729.6 314.2 L720.3 307.2 L715.7 300.3 L716.8 292.2 L725.0 286.4 L729.6 279.4 L723.8 270.0 Z" fill="#e27b98" stroke="#c8607f" stroke-width="0.9"/>
<path d="M559.8 244.3 L557.2 249.0 L565.1 252.9 L559.8 256.2 L555.2 256.2 L554.5 268.1 L546.0 266.8 L545.3 274.7 L553.2 276.0 L551.9 286.6 L545.3 290.6 L542.1 293.0 L544.0 296.7 L551.4 304.1 L557.0 300.4 L562.5 306.0 L568.1 313.4 L573.7 315.3 L575.5 322.7 L573.7 328.2 L579.2 330.1 L588.5 332.0 L597.4 335.0" fill="none" stroke="#959595" stroke-width="1.1" stroke-linejoin="round"/>
<path d="M520.0 268.7 L540.0 266.5" fill="none" stroke="#959595" stroke-width="1.1" stroke-linejoin="round"/>
<path d="M578.3 244.0 L579.6 260.2 L582.3 268.1 L590.2 277.4 L594.2 282.6 L590.9 286.6 L592.9 293.2 L597.4 298.4" fill="none" stroke="#959595" stroke-width="1.1" stroke-linejoin="round"/>
<path d="M578.3 247.0 L590.8 248.8 L615.0 247.7 L619.4 254.3 L622.4 256.5" fill="none" stroke="#959595" stroke-width="1.1" stroke-linejoin="round"/>
<path d="M568.1 324.5 L553.3 324.5 L550.5 340.0 L549.0 361.6 L560.2 365.1 L562.5 353.4 L561.3 341.7 L550.5 340.0" fill="none" stroke="#959595" stroke-width="1.1" stroke-linejoin="round"/>
<path d="M520.0 331.0 L540.3 333.8 L550.5 340.0" fill="none" stroke="#959595" stroke-width="1.1" stroke-linejoin="round"/>
<path d="M536.7 362.8 L541.4 383.9 L532.0 387.4 L529.7 395.6 L525.0 400.3 L520.3 409.7" fill="none" stroke="#959595" stroke-width="1.1" stroke-linejoin="round"/>
<path d="M540.0 340.0 L536.7 362.8 L549.0 361.6" fill="none" stroke="#959595" stroke-width="1.1" stroke-linejoin="round"/>
<path d="M525.0 400.3 L541.4 393.3 L553.1 395.6 L560.2 392.1 L567.2 388.6 L575.4 387.4 L581.3 395.4" fill="none" stroke="#959595" stroke-width="1.1" stroke-linejoin="round"/>
<path d="M602.2 339.7 L608.7 351.1 L610.3 362.5 L603.8 360.8 L594.1 354.4 L590.8 354.4 L584.4 362.5 L579.5 370.6 L576.2 378.7 L575.4 386.8 L560.0 390.0" fill="none" stroke="#959595" stroke-width="1.1" stroke-linejoin="round"/>
<path d="M592.5 356.0 L599.0 364.1 L599.0 369.0 L605.5 367.3 L608.7 372.2 L616.8 369.0 L625.0 377.1 L633.0 382.0 L644.4 377.1 L650.9 377.1 L655.8 383.6 L665.5 382.0 L672.0 372.2" fill="none" stroke="#959595" stroke-width="1.1" stroke-linejoin="round"/>
<path d="M562.0 431.0 L564.7 425.0 L574.2 417.9 L583.7 415.5" fill="none" stroke="#959595" stroke-width="1.1" stroke-linejoin="round"/>
<path d="M629.0 290.7 L627.7 300.0 L629.5 309.3 L630.5 327.8 L636.3 338.1 L639.5 346.2 L641.2 354.4 L641.2 359.2 L646.0 365.7 L654.2 367.3 L665.5 360.8 L673.6 349.5 L676.9 344.6 L682.3 337.1 L687.8 327.8" fill="none" stroke="#959595" stroke-width="1.1" stroke-linejoin="round"/>
<path d="M605.5 339.7 L612.0 341.4 L618.4 347.9 L623.3 357.6 L628.2 354.4 L639.5 354.4" fill="none" stroke="#959595" stroke-width="1.1" stroke-linejoin="round"/>
<path d="M676.9 344.6 L672.0 344.6 L667.4 337.1 L663.7 327.8 L657.4 327.8" fill="none" stroke="#959595" stroke-width="1.1" stroke-linejoin="round"/>
<path d="M653.3 244.4 L651.0 256.5 L648.9 257.6" fill="none" stroke="#959595" stroke-width="1.1" stroke-linejoin="round"/>
<path d="M667.0 243.5 L669.3 258.6 L671.6 263.2 L671.6 270.1 L675.0 274.8 L672.8 284.0 L674.0 292.2 L683.2 295.7 L685.5 302.6 L687.8 307.2 L686.7 318.8 L687.8 328.1 L691.5 337.1 L697.1 348.2 L702.7 352.0 L708.2 355.7 L706.4 363.1 L707.7 368.2 L704.4 371.5 L699.5 374.8 L697.9 381.4 L692.9 383.0 L686.3 388.0 L681.4 384.7 L683.0 376.5 L681.4 371.5 L676.5 366.6 L674.8 366.8" fill="none" stroke="#959595" stroke-width="1.1" stroke-linejoin="round"/>
<path d="M697.1 348.2 L691.5 355.7 L687.8 361.2 L678.6 365.0 L674.8 366.8 L671.9 374.5" fill="none" stroke="#959595" stroke-width="1.1" stroke-linejoin="round"/>
<path d="M702.7 352.0 L712.0 348.2 L721.2 346.4 L726.8 342.7 L730.5 337.1 L734.2 333.4 L743.0 331.5" fill="none" stroke="#959595" stroke-width="1.1" stroke-linejoin="round"/>
<path d="M720.3 307.2 L715.7 316.5 L711.0 321.2 L715.7 328.1 L725.0 332.8 L730.5 337.1" fill="none" stroke="#959595" stroke-width="1.1" stroke-linejoin="round"/>
<path d="M721.2 346.4 L725.0 355.7 L732.4 361.2 L734.2 370.5 L730.8 379.8 L743.0 381.4" fill="none" stroke="#959595" stroke-width="1.1" stroke-linejoin="round"/>
<path d="M706.4 363.1 L710.0 368.6 L721.2 368.6 L732.4 361.2" fill="none" stroke="#959595" stroke-width="1.1" stroke-linejoin="round"/>
<path d="M734.2 340.8 L743.0 339.0" fill="none" stroke="#959595" stroke-width="1.1" stroke-linejoin="round"/>
<path d="M687.8 307.2 L691.3 305.0 L697.1 301.4 L708.7 298.0 L715.7 294.5" fill="none" stroke="#959595" stroke-width="1.1" stroke-linejoin="round"/>
<path d="M721.7 243.5 L726.0 253.2 L730.5 259.9" fill="none" stroke="#959595" stroke-width="1.1" stroke-linejoin="round"/>
<path d="M697.9 381.4 L702.8 389.6 L709.4 392.9 L712.7 388.0 L711.0 378.1 L714.3 371.5 L717.6 368.2 L721.2 368.6" fill="none" stroke="#959595" stroke-width="1.1" stroke-linejoin="round"/>
<path d="M712.7 388.0 L717.6 392.9 L719.3 409.4 L711.0 411.0 L711.0 414.3 L714.3 416.0 L712.7 425.8 L710.0 431.0" fill="none" stroke="#959595" stroke-width="1.1" stroke-linejoin="round"/>
<path d="M689.6 409.4 L696.2 416.0 L701.2 422.6 L704.4 431.0" fill="none" stroke="#959595" stroke-width="1.1" stroke-linejoin="round"/>
<path d="M650.0 301.8 L647.8 306.2" fill="none" stroke="#959595" stroke-width="1.1" stroke-linejoin="round"/>
<path d="M743.0 328.1 L734.2 332.8 L730.5 337.1" fill="none" stroke="#959595" stroke-width="1.1" stroke-linejoin="round"/>
<path d="M660.0 323.5 L664.6 332.8" fill="none" stroke="#959595" stroke-width="1.1" stroke-linejoin="round"/>
<path d="M687.8 328.1 L680.9 340.0" fill="none" stroke="#959595" stroke-width="1.1" stroke-linejoin="round"/>
<text x="729" y="281" font-size="6.5" fill="#a9405f" font-family="Liberation Sans">Cu</text>
<text x="652" y="249" font-size="4.5" fill="#b8b8b8" opacity="0.6" font-family="Liberation Sans">Tlacotalpan</text>
<text x="630" y="272" font-size="4.5" fill="#b8b8b8" opacity="0.6" font-family="Liberation Sans">Texistepec</text>
<text x="606" y="396" font-size="4.5" fill="#b8b8b8" opacity="0.6" font-family="Liberation Sans">Tierra</text>
<text x="640" y="247" font-size="4.5" fill="#b8b8b8" opacity="0.6" font-family="Liberation Sans">Poblacion</text>
</g></svg>
<div class="abs" style="left:526px;top:250.8px;width:14px;height:14.6px;background:#fff;border-radius:2px;box-shadow:0 0 0 1px #d0d0d0"></div>
<div class="abs" style="left:526px;top:271.2px;width:14px;height:43.8px;background:#fff;border-radius:2px;box-shadow:0 0 0 1px #d0d0d0"></div>
<div class="abs" style="left:526px;top:320.8px;width:14px;height:15.6px;background:#fff;border-radius:2px;box-shadow:0 0 0 1px #d0d0d0"></div>
<svg class="abs" style="left:526px;top:251px" width="14" height="14" viewBox="0 0 14 14"><path d="M2.8 5.8V2.8H5.8 M8.2 2.8H11.2V5.8 M11.2 8.2V11.2H8.2 M5.8 11.2H2.8V8.2" stroke="#111" stroke-width="1.5" fill="none"/></svg>
<svg class="abs" style="left:526px;top:271px" width="14" height="44" viewBox="0 0 14 44"><path d="M7 4.3 V10.3 M4 7.3 H10" stroke="#111" stroke-width="1.5"/><path d="M7 18 L11.8 22.3 H10.4 V26 H8.1 V23.5 H5.9 V26 H3.6 V22.3 H2.2Z" fill="#111"/><path d="M4.2 36.3 H9.8" stroke="#111" stroke-width="1.5"/></svg>
<svg class="abs" style="left:526px;top:322.2px" width="14" height="13" viewBox="0 0 14 13"><path d="M4.6 2.5H9.4V5H4.6Z" fill="#111"/><path d="M2.8 5.2H11.2V9.3H2.8Z" fill="#111"/><path d="M4.3 8H9.7V11H4.3Z" fill="#fff" stroke="#111" stroke-width="0.9"/></svg>
<div class="abs" style="left:524.5px;top:418px;width:10px;height:10px;border-radius:50%;border:1.2px solid #3f4f4d;background:rgba(255,255,255,.6)"></div>
<div class="t" style="left:527.3px;top:419.8px;font-size:6.8px;font-weight:bold;color:#3f4f4d">?</div>
</body></html>
